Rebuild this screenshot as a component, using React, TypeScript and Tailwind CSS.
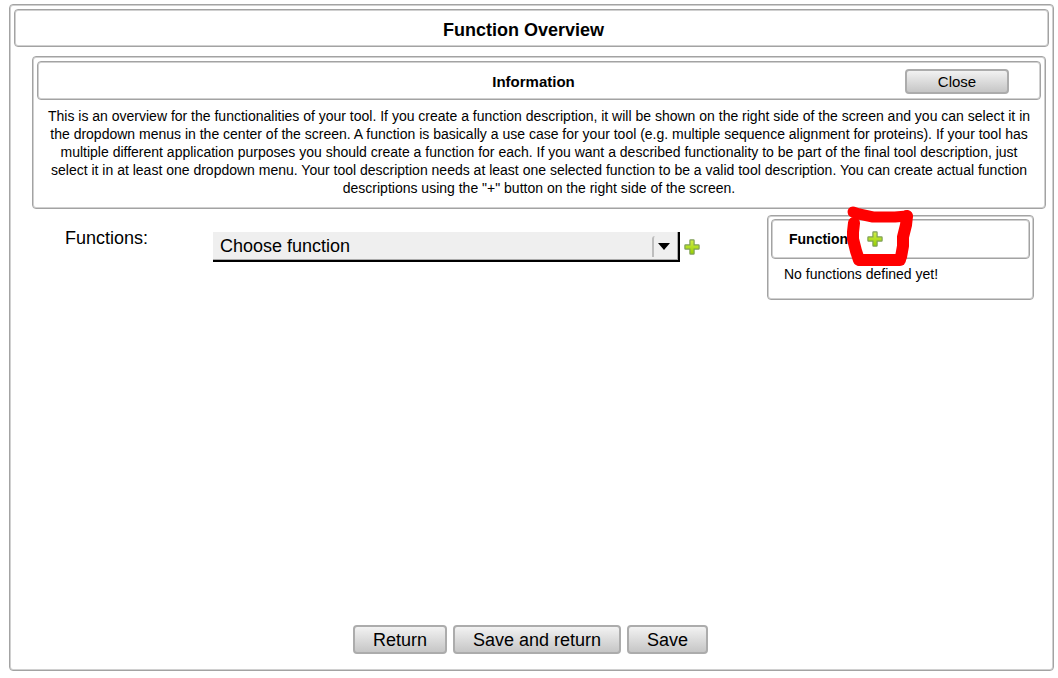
import type { ReactNode } from "react";

const frame =
  "rounded-[4px] border border-[#a3a3a3] bg-white shadow-[inset_0_0_0_1px_#d0d0d0]";

const buttonLook =
  "rounded-[4px] border-2 border-[#acacac] bg-linear-to-b from-[#f2f2f2] to-[#c6c6c6] text-black";

function PlusIcon() {
  return (
    <svg width="16" height="16" viewBox="0 0 16 16" aria-hidden="true">
      <defs>
        <linearGradient id="plusFill" x1="0" y1="0" x2="0" y2="1">
          <stop offset="0" stopColor="#d2ee4a" />
          <stop offset="1" stopColor="#96d000" />
        </linearGradient>
      </defs>
      <path
        d="M6.5 .9h3q.6 0 .6.6v4.4h4.4q.6 0 .6.6v3q0 .6-.6.6h-4.4v4.4q0 .6-.6.6h-3q-.6 0-.6-.6v-4.4H1.500q-.6 0-.6-.6v-3q0-.6.6-.6h4.4V1.500q0-.6.6-.6z"
        fill="url(#plusFill)"
        stroke="#7f9f55"
        strokeWidth="1.2"
      />
    </svg>
  );
}

function IconButton({ label }: { label: string }) {
  return (
    <button type="button" aria-label={label} className="flex size-4 shrink-0">
      <PlusIcon />
    </button>
  );
}

function ActionButton({ children }: { children: ReactNode }) {
  return (
    <button type="button" className={`${buttonLook} h-[29px] px-[18px] text-[18px] leading-6`}>
      {children}
    </button>
  );
}

function Marker() {
  return (
    <svg
      className="pointer-events-none absolute -top-[15px] left-[73px]"
      width="70"
      height="64"
      viewBox="0 0 70 64"
      fill="none"
      stroke="#ff0000"
      strokeLinecap="round"
      strokeLinejoin="round"
      aria-hidden="true"
    >
      <path d="M8 7 14 9 28 12 50 12 62 11" strokeWidth="11" />
      <path d="M62 11 61 20 58 32 58 41 56 52" strokeWidth="12" />
      <path d="M55 55 36 55H15" strokeWidth="12" />
      <path d="M14 55 11 46 8 34 8 27 9 18" strokeWidth="12" />
    </svg>
  );
}

export default function App() {
  return (
    <div className="flex min-h-screen flex-col bg-white pt-1 pr-1 pb-[7px] pl-[9px] font-['Liberation_Sans',Arial,sans-serif] text-black">
      <main className={`${frame} flex flex-1 flex-col p-1`}>
        <header className={`${frame} flex h-[38px] items-center justify-center pr-4 pt-1`}>
          <h1 className="text-[18px] leading-6 font-bold">Function Overview</h1>
        </header>

        <section className={`${frame} mt-[9px] mr-[3px] ml-[18px] p-1 pb-[11px]`}>
          <div
            className={`${frame} grid h-[39px] grid-cols-[1fr_auto_1fr] items-center pt-[2px] pr-[31px] pl-5`}
          >
            <h2 className="col-start-2 text-[15px] leading-5 font-bold">Information</h2>
            <button
              type="button"
              className={`${buttonLook} h-[25px] w-[104px] justify-self-end text-[15px] leading-5`}
            >
              Close
            </button>
          </div>
          <p className="px-2 pt-[7px] text-center text-[14px] leading-[18px]">
            This is an overview for the functionalities of your tool. If you create a function
            description, it will be shown on the right side of the screen and you can select it in
            the dropdown menus in the center of the screen. A function is basically a use case for
            your tool (e.g. multiple sequence alignment for proteins). If your tool has multiple
            different application purposes you should create a function for each. If you want a
            described functionality to be part of the final tool description, just select it in at
            least one dropdown menu. Your tool description needs at least one selected function to
            be a valid tool description. You can create actual function descriptions using the "+"
            button on the right side of the screen.
          </p>
        </section>

        <div className="mt-[6px] mr-[15px] ml-[51px] flex items-start">
          <label htmlFor="function" className="w-[148px] shrink-0 pt-[11px] text-[18px] leading-6">
            Functions:
          </label>
          <div className="mr-[67px] flex flex-1 items-center gap-1 pt-[17px]">
            <div className="relative flex-1">
              <select
                id="function"
                className="block h-[30px] w-full appearance-none rounded-none border-r-2 border-b-2 border-black bg-[#efefef] pr-8 pl-[7px] text-[18px] leading-6 shadow-[inset_-1px_-1px_0_#aaaaaa]"
              >
                <option>Choose function</option>
              </select>
              <span className="pointer-events-none absolute top-1 right-[6px] flex h-[21px] w-[22px] items-center justify-center rounded-tl-[3px] border-l-2 border-[#bdbdbd]">
                <svg width="12" height="7" viewBox="0 0 12 7" aria-hidden="true">
                  <path d="M0 0h12L6 7z" fill="#000" />
                </svg>
              </span>
            </div>
            <IconButton label="Add function selection" />
          </div>

          <aside className={`${frame} relative w-[267px] shrink-0 p-[3px] pb-[13px]`}>
            <div className={`${frame} relative flex h-10 items-center pl-[17px]`}>
              <h2 className="w-[78px] text-[14px] leading-[18px] font-bold">Functions</h2>
              <IconButton label="Create function" />
              <Marker />
            </div>
            <p className="pt-[6px] pb-[3px] pl-[13px] text-[14px] leading-[18px]">
              No functions defined yet!
            </p>
          </aside>
        </div>

        <footer className="mt-auto flex justify-center gap-[6px] pr-[2px] pb-3">
          <ActionButton>Return</ActionButton>
          <ActionButton>Save and return</ActionButton>
          <ActionButton>Save</ActionButton>
        </footer>
      </main>
    </div>
  );
}
